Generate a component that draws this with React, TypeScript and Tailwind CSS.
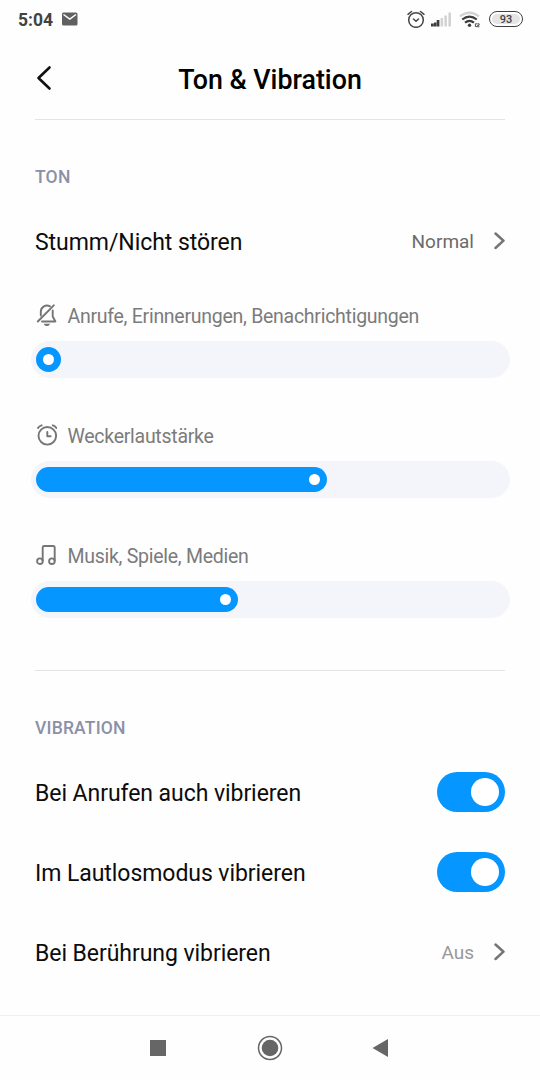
import { useState, type ReactNode } from 'react'

// ── Icons ─────────────────────────────────────────────────────────────
function BellOffIcon() {
  return (
    <svg width="22" height="24" viewBox="0 0 22 24" fill="none" stroke="#757575" strokeWidth="1.9" strokeLinecap="round" strokeLinejoin="round">
      <path d="M5.800 12.500V8.700a6.200 6.200 0 0 1 9.200-5.400" />
      <path d="M17.700 7.500V13.500l2.700 5H7" />
      <path d="M2.800 18.500L18.800 2.300" />
      <path d="M8.800 20.700h6.200c-.5 1.500-1.600 2.300-3.100 2.300s-2.600-.8-3.100-2.300z" fill="#757575" stroke="none" />
    </svg>
  )
}

function AlarmIcon() {
  return (
    <svg width="22" height="24" viewBox="0 0 22 24" fill="none" stroke="#757575" strokeWidth="1.9" strokeLinecap="round" strokeLinejoin="round">
      <circle cx="12.300" cy="12.800" r="8.800" />
      <path d="M12.300 9V13.300h3.300" />
      <path d="M3 5Q4.200 3 6.600 2.300M21.400 5Q20.200 3 17.800 2.300" />
    </svg>
  )
}

function MusicIcon() {
  return (
    <svg width="22" height="24" viewBox="0 0 22 24" fill="none" stroke="#757575" strokeWidth="1.9" strokeLinejoin="round">
      <circle cx="4.900" cy="18.200" r="2.800" />
      <circle cx="16.900" cy="18.200" r="2.800" />
      <path d="M7.700 18.200V4.500Q7.700 3 9.200 3H18.200Q19.700 3 19.700 4.500V18.200" />
    </svg>
  )
}

function ChevronRight() {
  return (
    <svg width="12" height="18" viewBox="0 0 12 18" fill="none" stroke="#757575" strokeWidth="2.500" strokeLinecap="round" strokeLinejoin="round">
      <path d="M2.500 1.500L10.500 8.700L2.500 16" />
    </svg>
  )
}

// ── Status bar ────────────────────────────────────────────────────────
function StatusBar() {
  return (
    <div className="flex h-10 items-center justify-between pl-[18px] pr-[17px] text-[#424242]">
      <div className="flex items-center gap-[9px]">
        <span className="text-[17.500px] font-bold leading-5">5:04</span>
        <svg width="16" height="14" viewBox="0 0 16 14" className="mb-[2px]">
          <rect y="0.500" width="15.500" height="13" rx="1.500" fill="#606060" />
          <path d="M1.500 2.500L7.800 7L14 2.500" fill="none" stroke="#fff" strokeWidth="1.500" />
        </svg>
      </div>
      <div className="mb-[2px] flex items-center">
        <svg width="18" height="18" viewBox="0 0 18 18" fill="none" stroke="#454545" strokeWidth="1.500" strokeLinecap="round">
          <circle cx="9" cy="10" r="7.300" />
          <path d="M6.500 9L9 11.200L11.500 9M1 4.300L4.500 1.500M17 4.300L13.500 1.500" />
        </svg>
        <svg width="21" height="16" viewBox="0 0 21 16" className="ml-[6px]">
          <path d="M0 12.500h2.700v3H0zM2.900 11.500h2.500v4H2.900zM5.700 9h2.700v6.500H5.700z" fill="#3d3d3d" />
          <path d="M9.600 7h2.500v8.500H9.600zM13.400 4.500h2.500v11h-2.500zM17.400 1.500H20v14h-2.600z" fill="#d2d2d2" />
        </svg>
        <svg width="22" height="17" viewBox="0 0 22 17" className="ml-[7px]" fill="none" strokeWidth="2.200">
          <path d="M1 5.300Q10.500-1.800 20 5.300" stroke="#d2d2d2" />
          <path d="M3.200 8.500Q10.500 2.800 17.800 8.500M6 11.700Q10.500 8 15 11.700" stroke="#3d3d3d" />
          <circle cx="10.500" cy="14.200" r="1.700" fill="#3d3d3d" />
          <path d="M18.200 12.800h-1.800v2.800h1.800M18.500 12.800h1.600v1.500h-1.500v1.500h1.800" stroke="#3d3d3d" strokeWidth="0.900" />
        </svg>
        <div className="ml-[8px] flex h-[16px] w-[34px] rounded-full border-[1.500px] border-[#404040] p-[2px]">
          <div className="flex flex-1 items-center justify-center rounded-full bg-[#e4e4e4] text-[11px] font-medium leading-none">93</div>
        </div>
      </div>
    </div>
  )
}

// ── Settings rows ─────────────────────────────────────────────────────
function SectionTitle({ children }: { children: ReactNode }) {
  return <h2 className="pt-[45px] text-[17.500px] font-medium leading-6 tracking-[0.200px] text-[#8b90a8]">{children}</h2>
}

function Row({ label, children }: { label: string; children: ReactNode }) {
  return (
    <div className="flex h-20 items-center justify-between">
      <span className="pt-[3px] text-[23px] leading-7 tracking-[-0.060px] text-[#0c0c0c]">{label}</span>
      {children}
    </div>
  )
}

function LinkValue({ value, muted }: { value: string; muted?: boolean }) {
  return (
    <div className={`flex items-center gap-[19px] text-[19px] leading-6 ${muted ? 'text-[#999999]' : 'text-[#6b6b6b]'}`}>
      <span className="pt-px">{value}</span>
      <ChevronRight />
    </div>
  )
}

function Toggle() {
  const [on, setOn] = useState(true)
  return (
    <button
      role="switch"
      aria-checked={on}
      onClick={() => setOn(!on)}
      className={`flex h-10 w-[68px] items-center rounded-full px-[6px] ${on ? 'justify-end bg-[#0696ff]' : 'justify-start bg-gray-300'}`}
    >
      <span className="size-7 rounded-full bg-white" />
    </button>
  )
}

// width = filled part of the track in px
function VolumeSlider({ icon, label, width }: { icon: ReactNode; label: string; width: number }) {
  return (
    <div className="h-[120px] pt-[22px]">
      <div className="flex h-6 items-center gap-[10.500px]">
        {icon}
        <span className="pt-[3px] text-[19.500px] leading-6 tracking-[-0.270px] text-[#7b7b7b]">{label}</span>
      </div>
      <div className="-ml-1 -mr-[5px] mt-[14px] flex h-[37px] items-center rounded-full bg-[#f4f5fa] pl-[5px]">
        <div className="flex h-[25px] items-center justify-end rounded-full bg-[#0696ff] pr-[7px]" style={{ width }}>
          <span className="size-[11px] rounded-full bg-white" />
        </div>
      </div>
    </div>
  )
}

export default function App() {
  return (
    <div className="flex h-[1080px] w-[540px] flex-col overflow-hidden bg-[#fefefe] font-['Roboto',sans-serif]">
      <StatusBar />

      <main className="flex flex-1 flex-col px-[35px]">
        <header className="grid h-20 grid-cols-[40px_1fr_40px] items-center border-b border-[#e3e3e3]">
          <button aria-label="Zurück" className="pb-[3px]">
            <svg width="18" height="26" viewBox="0 0 18 26" fill="none" stroke="#111" strokeWidth="2.600" strokeLinecap="round" strokeLinejoin="round">
              <path d="M14.500 2.500L3.500 13L14.500 23.500" />
            </svg>
          </button>
          <h1 className="text-center text-[26.800px] font-medium leading-8 text-black">Ton &amp; Vibration</h1>
        </header>

        <section className="h-[551px] border-b border-[#e3e3e3]">
          <SectionTitle>TON</SectionTitle>
          <div className="pt-3">
            <Row label="Stumm/Nicht stören">
              <LinkValue value="Normal" />
            </Row>
            <VolumeSlider icon={<BellOffIcon />} label="Anrufe, Erinnerungen, Benachrichtigungen" width={25} />
            <VolumeSlider icon={<AlarmIcon />} label="Weckerlautstärke" width={291} />
            <VolumeSlider icon={<MusicIcon />} label="Musik, Spiele, Medien" width={202} />
          </div>
        </section>

        <section>
          <SectionTitle>VIBRATION</SectionTitle>
          <div className="pt-3">
            <Row label="Bei Anrufen auch vibrieren">
              <Toggle />
            </Row>
            <Row label="Im Lautlosmodus vibrieren">
              <Toggle />
            </Row>
            <Row label="Bei Berührung vibrieren">
              <LinkValue value="Aus" muted />
            </Row>
          </div>
        </section>
      </main>

      {/* Android navigation */}
      <nav className="flex h-[65px] items-center justify-between border-t border-[#efefef] pl-[150px] pr-[151px]">
        <span className="size-4 bg-[#666666]" />
        <svg width="26" height="26" viewBox="0 0 26 26" className="ml-[2px]">
          <circle cx="13" cy="13" r="11.500" fill="none" stroke="#666666" strokeWidth="1.500" />
          <circle cx="13" cy="13" r="8.300" fill="#666666" />
        </svg>
        <svg width="17" height="18" viewBox="0 0 17 18">
          <path d="M0.500 9L16 0V18z" fill="#666666" />
        </svg>
      </nav>
    </div>
  )
}
